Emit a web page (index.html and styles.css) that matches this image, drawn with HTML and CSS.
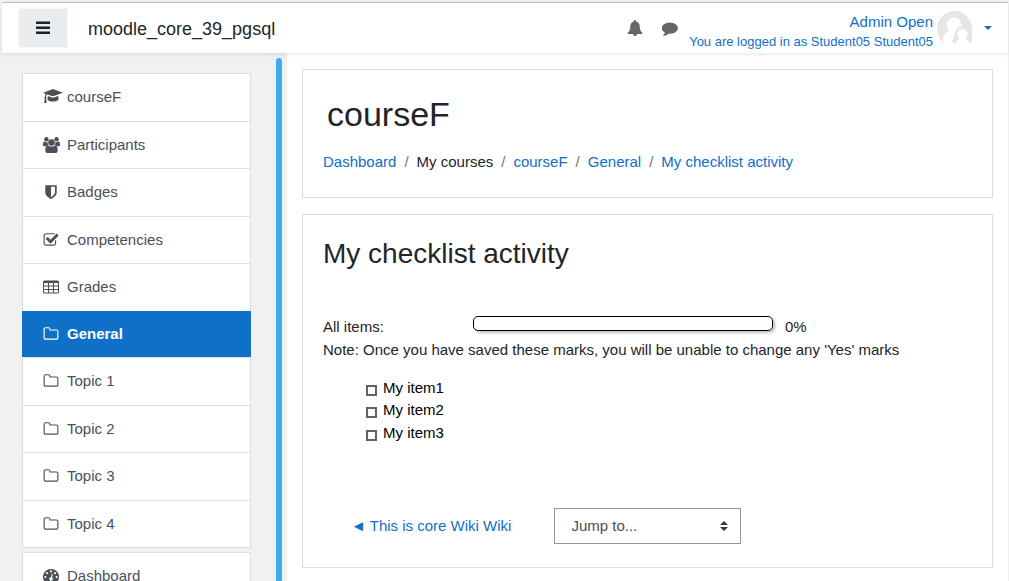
FILE: index.html
```html
<!DOCTYPE html>
<html lang="en">

<head>
  <meta charset="UTF-8">
  <meta name="viewport" content="width=device-width, initial-scale=1.0">
  <title>courseF: My checklist activity</title>

  <link rel="stylesheet" href="styles.css">
</head>

<body>
  <!-- Shared icon shapes -->
  <svg class="sprite" aria-hidden="true">
    <symbol id="folder" viewBox="0 0 1792 1792">
      <path d="M1600 1312v-704q0-40-28-68t-68-28h-704q-40 0-68-28t-28-68v-64q0-40-28-68t-68-28h-320q-40 0-68 28t-28 68v960q0 40 28 68t68 28h1216q40 0 68-28t28-68zm128-704v704q0 92-66 158t-158 66h-1216q-92 0-158-66t-66-158v-960q0-92 66-158t158-66h320q92 0 158 66t66 158v32h672q92 0 158 66t66 158z"/>
    </symbol>
  </svg>

  <!-- Top bar -->
  <header class="navbar">
    <button class="menu-button" type="button" aria-label="Side panel">
      <svg class="icon" viewBox="0 0 16 16"><path d="M1 1.500h14v2.500H1zM1 6.500h14V9H1zM1 11.500h14V14H1z"/></svg>
    </button>
    <a class="site-name" href="#">moodle_core_39_pgsql</a>

    <div class="nav-icons">
      <button class="nav-icon" type="button" aria-label="Notifications">
        <svg class="icon" viewBox="0 0 16 16"><path d="M8 0c.6 0 1 .4 1 1v.6c2.400.5 3.700 2.300 3.700 4.700 0 3.500 1 5.300 2.600 6.500v1.200H.7v-1.200c1.600-1.200 2.600-3 2.600-6.500C3.300 3.900 4.600 2.100 7 1.600V1c0-.6.4-1 1-1zM5.900 14h4.200c0 1.200-.9 2-2.100 2s-2.100-.8-2.100-2z"/></svg>
      </button>
      <button class="nav-icon" type="button" aria-label="Messages">
        <svg class="icon" viewBox="0 0 1792 1792"><path d="M1792 896q0 174-120 321.500t-326 233-450 85.500q-70 0-145-8-198 175-460 242-49 14-114 22-17 2-30.500-9t-17.500-29q0-14 18-35 75-80 110-145t60-150q-157-89-247.500-220t-90.500-281q0-130 71-248.500t191-204.500 286-136.500 348-50.500q244 0 450 85.500t326 233 120 321.500z"/></svg>
      </button>
    </div>

    <div class="user">
      <div class="user-text">
        <a class="user-name" href="#">Admin Open</a>
        <a class="user-note" href="#">You are logged in as Student05 Student05</a>
      </div>
      <svg class="avatar" viewBox="0 0 35 35" aria-hidden="true">
        <path class="avatar-back" d="M6 32C2 28 0 23 0 18 0 8 8 0 17.500 0S35 8 35 18v14z"/>
        <path class="avatar-front" d="M5.500 33c0-6 2-11 6-13h6v13z"/>
        <circle class="avatar-front" cx="17" cy="14" r="7.500"/>
        <path class="avatar-back" d="M15 32c0-4 1.500-6 4-7l6-3 9 3v7z"/>
        <circle class="avatar-back" cx="25.500" cy="22.500" r="7.500"/>
        <path class="avatar-front" d="M19 33c.3-3 1.500-5 4-6h5c2.500 1 3.700 3 4 6z"/>
        <circle class="avatar-front" cx="25.500" cy="23" r="5"/>
      </svg>
      <button class="user-toggle" type="button" aria-label="User menu">
        <svg viewBox="0 0 8 4"><path d="M0 0h8L4 4z"/></svg>
      </button>
    </div>
  </header>

  <div class="page">
    <!-- Navigation drawer -->
    <aside class="drawer">
      <nav class="drawer-lists">
        <ul class="nav-list">
          <li><a href="#">
            <svg class="icon cap" viewBox="0 0 20 16"><path d="M10 0l10 3.800L10 7.300 4 5.500C3.200 6 3 6.700 2.900 7.500c.8.500.8 1.300.2 1.800L3.700 14H1.200l.6-4.700C1.200 8.800 1.300 8 1.900 7.500 2 6.500 2.200 5.700 2.700 5.100L0 3.800zM4.800 7L10 8.700 15.200 7l.3 3.200c-.3 3.200-10.700 3.200-11 0z"/></svg>
            courseF</a></li>
          <li><a href="#">
            <svg class="icon users" viewBox="0 0 17 16"><circle cx="3.400" cy="2.200" r="2.200"/><circle cx="13.600" cy="2.200" r="2.200"/><path d="M1.500 4.600c1.200.8 2.200.7 3.200.4-.2 1.200.1 2.300.8 3.200-1 0-1.800.4-2.400 1.100H1.500C.5 9.300 0 8.800 0 7.900c0-1.400.3-3.300 1.500-3.300zM15.500 4.600c-1.200.8-2.200.7-3.200.4.200 1.200-.1 2.300-.8 3.200 1 0 1.800.4 2.400 1.100h1.600c1 0 1.500-.5 1.500-1.400 0-1.400-.3-3.300-1.500-3.300z"/><circle cx="8.500" cy="5.500" r="3.300"/><path d="M5.200 8.400c2 1.600 4.600 1.600 6.600 0 2.300 0 2.900 2.300 2.900 5 0 1.600-1 2.600-2.600 2.600H4.900c-1.600 0-2.600-1-2.600-2.600 0-2.700.6-5 2.900-5z"/></svg>
            Participants</a></li>
          <li><a href="#">
            <svg class="icon" viewBox="0 0 1792 1792"><path d="M1344 960v-640h-448v1137q119-63 213-137 235-184 235-360zm192-768v768q0 86-33.500 170.500t-83 150-118 127.500-126.500 103-121 77.500-89.500 49.500-42.500 20q-12 6-26 6t-26-6q-16-7-42.500-20t-89.500-49.500-121-77.500-126.500-103-118-127.500-83-150-33.500-170.500v-768q0-26 19-45t45-19h1152q26 0 45 19t19 45z"/></svg>
            Badges</a></li>
          <li><a href="#">
            <svg class="icon" viewBox="0 0 1792 1792"><path d="M1472 930v318q0 119-84.500 203.500t-203.500 84.500h-832q-119 0-203.500-84.500t-84.500-203.500v-832q0-119 84.500-203.500t203.500-84.500h832q63 0 117 25 15 7 18 23 3 17-9 29l-49 49q-10 10-23 10-3 0-9-2-23-6-45-6h-832q-66 0-113 47t-47 113v832q0 66 47 113t113 47h832q66 0 113-47t47-113v-254q0-13 9-22l64-64q10-10 23-10 6 0 12 3 20 8 20 29zm231-489l-814 814q-24 24-57 24t-57-24l-430-430q-24-24-24-57t24-57l110-110q24-24 57-24t57 24l263 263 647-647q24-24 57-24t57 24l110 110q24 24 24 57t-24 57z"/></svg>
            Competencies</a></li>
          <li><a href="#">
            <svg class="icon" viewBox="0 0 16 16"><path fill-rule="evenodd" d="M1.500 1.500h13A1.500 1.500 0 0 1 16 3v10a1.500 1.500 0 0 1-1.500 1.500h-13A1.500 1.500 0 0 1 0 13V3a1.500 1.500 0 0 1 1.500-1.500zM1 4v2.500h4V4zm5 0v2.500h4V4zm5 0v2.500h4V4zM1 7.500V10h4V7.500zm5 0V10h4V7.500zm5 0V10h4V7.500zM1 11v2.500h4V11zm5 0v2.500h4V11zm5 0v2.500h4V11z"/></svg>
            Grades</a></li>
          <li><a class="active" href="#"><svg class="icon"><use href="#folder"/></svg> General</a></li>
          <li><a href="#"><svg class="icon"><use href="#folder"/></svg> Topic 1</a></li>
          <li><a href="#"><svg class="icon"><use href="#folder"/></svg> Topic 2</a></li>
          <li><a href="#"><svg class="icon"><use href="#folder"/></svg> Topic 3</a></li>
          <li><a href="#"><svg class="icon"><use href="#folder"/></svg> Topic 4</a></li>
        </ul>
        <ul class="nav-list">
          <li><a href="#">
            <svg class="icon" viewBox="0 0 16 16"><path fill-rule="evenodd" d="M8 1a8 8 0 0 1 6.800 12.200c-.3.500-.6.800-1.100.8H2.300c-.5 0-.8-.3-1.100-.8A8 8 0 0 1 8 1zM8 2.200a1.100 1.100 0 1 0 .01 0zM4 3.900a1.100 1.100 0 1 0 .01 0zM12 3.900a1.100 1.100 0 1 0 .01 0zM2.300 7.900a1.100 1.100 0 1 0 .01 0zM13.700 7.900a1.100 1.100 0 1 0 .01 0zM8.900 5.800L8 9.300a1.700 1.700 0 1 0 1 .3L9.900 6z"/></svg>
            Dashboard</a></li>
        </ul>
      </nav>
      <div class="scroll-track"><div class="scroll-thumb"></div></div>
    </aside>

    <main class="content">
      <section class="card course-header">
        <h1>courseF</h1>
        <ol class="breadcrumb">
          <li><a href="#">Dashboard</a></li>
          <li>My courses</li>
          <li><a href="#">courseF</a></li>
          <li><a href="#">General</a></li>
          <li><a href="#">My checklist activity</a></li>
        </ol>
      </section>

      <section class="card activity">
        <h2>My checklist activity</h2>

        <div class="progress-row">
          <span class="progress-label" id="progressLabel">All items:</span>
          <div class="progress" role="progressbar" aria-labelledby="progressLabel" aria-valuemin="0" aria-valuemax="100" aria-valuenow="0"></div>
          <span>0%</span>
        </div>
        <p class="note">Note: Once you have saved these marks, you will be unable to change any 'Yes' marks</p>

        <ol class="checklist">
          <li><input type="checkbox" id="item1"><label for="item1">My item1</label></li>
          <li><input type="checkbox" id="item2"><label for="item2">My item2</label></li>
          <li><input type="checkbox" id="item3"><label for="item3">My item3</label></li>
        </ol>

        <!-- Previous activity / jump menu -->
        <div class="activity-nav">
          <a href="#">◄ This is core Wiki Wiki</a>
          <select class="jump" aria-label="Jump to...">
            <option>Jump to...</option>
          </select>
        </div>
      </section>
    </main>
  </div>
</body>

</html>
```

FILE: styles.css
```css
* {
  box-sizing: border-box;
}

body {
  display: flex;
  flex-direction: column;
  height: 100vh;
  margin: 0;
  padding: 2px 1px 0 2px;
  overflow: hidden;
  background-color: #eff0f1;
  color: #212529;
  font-family: "Liberation Sans", Arial, sans-serif;
  font-size: 15px;
  line-height: 1.5;
}

a {
  color: #1070c8;
  text-decoration: none;
}

h1,
h2,
p,
ul,
ol {
  margin: 0;
  padding: 0;
  font-weight: normal;
}

ul,
ol {
  list-style: none;
}

button {
  padding: 0;
  border: none;
  background: none;
  cursor: pointer;
}

.sprite {
  display: none;
}

.icon {
  flex: none;
  width: 16px;
  height: 16px;
  fill: currentColor;
}

/* Top bar */
.navbar {
  position: relative;
  z-index: 1;
  display: flex;
  flex: none;
  align-items: center;
  height: 51px;
  padding: 0 16px;
  border-top: 1px solid #bcc0c3;
  background-color: #fff;
  box-shadow: 0 2px 4px rgba(0, 0, 0, 0.08);
}

.menu-button {
  display: flex;
  align-items: center;
  justify-content: center;
  width: 50px;
  height: 40px;
  border: 1px solid #f8f9fa;
  background-color: #e9ecef;
  color: #1d2125;
}

.site-name {
  margin-left: 20px;
  padding-top: 2px;
  color: #212529;
  font-size: 18px;
}

.nav-icons {
  display: flex;
  gap: 19px;
  margin-left: auto;
}

.nav-icon {
  display: flex;
  color: #666;
}

.user {
  display: flex;
  align-items: center;
  margin-left: 11px;
}

.user-text {
  display: flex;
  flex-direction: column;
  align-items: flex-end;
  padding-top: 8px;
  line-height: 20px;
}

.user-note {
  font-size: 13px;
}

.avatar {
  width: 35px;
  height: 35px;
  margin-left: 4px;
}

.avatar-back {
  fill: #e6e6e6;
}

.avatar-front {
  fill: #fff;
}

.user-toggle {
  display: flex;
  margin-left: 12px;
}

.user-toggle svg {
  width: 8px;
  height: 4px;
  fill: #1070c8;
}

/* Page body */
.page {
  display: flex;
  flex: 1;
  min-height: 0;
}

.drawer {
  display: flex;
  flex: none;
  width: 285px;
  overflow: hidden;
  background-color: #f1f1f1;
}

.drawer-lists {
  flex: 1;
  padding: 20px;
}

.nav-list {
  margin-bottom: 4px;
  border: 1px solid #dcdddd;
  background-color: #fff;
}

.nav-list li + li {
  border-top: 1px solid #dcdddd;
}

.nav-list a {
  display: flex;
  align-items: center;
  gap: 8px;
  padding: 12px 20px;
  color: #495057;
}

.nav-list .active {
  margin: -1px -1px 0;
  padding: 12px 21px;
  background-color: #1070c8;
  color: #fff;
  font-weight: bold;
}

.nav-list .cap {
  width: 20px;
  margin-right: -4px;
}

.nav-list .users {
  width: 17px;
  margin-right: -1px;
}

.scroll-track {
  width: 16px;
  padding: 5px 5px 0;
  background-color: #edeff1;
}

.scroll-thumb {
  height: 100%;
  border-radius: 3px 3px 0 0;
  background-color: #3daee9;
}

.content {
  display: flex;
  flex: 1;
  flex-direction: column;
  gap: 16px;
  padding: 16px 15px;
  background-color: #fff;
}

.card {
  padding: 23px 20px;
  border: 1px solid #dcdddd;
}

h1 {
  padding-left: 4px;
  font-size: 34px;
  line-height: 42px;
}

h2 {
  font-size: 28px;
  line-height: 34px;
}

.breadcrumb {
  display: flex;
  margin-top: 16px;
}

.breadcrumb li + li::before {
  content: "/";
  padding: 0 8px;
  color: #6c757d;
}

.activity {
  padding-top: 22px;
}

.progress-row {
  display: flex;
  margin-top: 45px;
}

.progress-label {
  width: 150px;
}

.progress {
  width: 300px;
  height: 15px;
  margin-right: 12px;
  border: 1px solid #000;
  border-radius: 5px;
  box-shadow: 2px 2px 3px rgba(0, 0, 0, 0.25);
}

.note {
  margin-top: 1px;
}

.checklist {
  margin: 15px 0 0 42px;
  color: #000;
}

.checklist li {
  display: flex;
  align-items: center;
  gap: 6px;
}

.checklist input {
  width: 11px;
  height: 11px;
  margin: 5px 0 0 1px;
  border: 2px solid #636363;
  background-color: #fff;
  appearance: none;
}

.checklist input:checked {
  background-color: #636363;
}

.activity-nav {
  display: flex;
  align-items: center;
  gap: 43px;
  margin-top: 64px;
  padding-left: 28px;
}

.jump {
  width: 187px;
  height: 36px;
  padding: 0 16px;
  border: 1px solid #8f959e;
  border-radius: 0;
  background: #fff url("data:image/svg+xml,%3Csvg xmlns='http://www.w3.org/2000/svg' viewBox='0 0 4 5'%3E%3Cpath fill='%23343a40' d='M2 0L0 2h4zm0 5L0 3h4z'/%3E%3C/svg%3E") no-repeat right 12px center / 8px 10px;
  color: #495057;
  font: inherit;
  appearance: none;
}
```
